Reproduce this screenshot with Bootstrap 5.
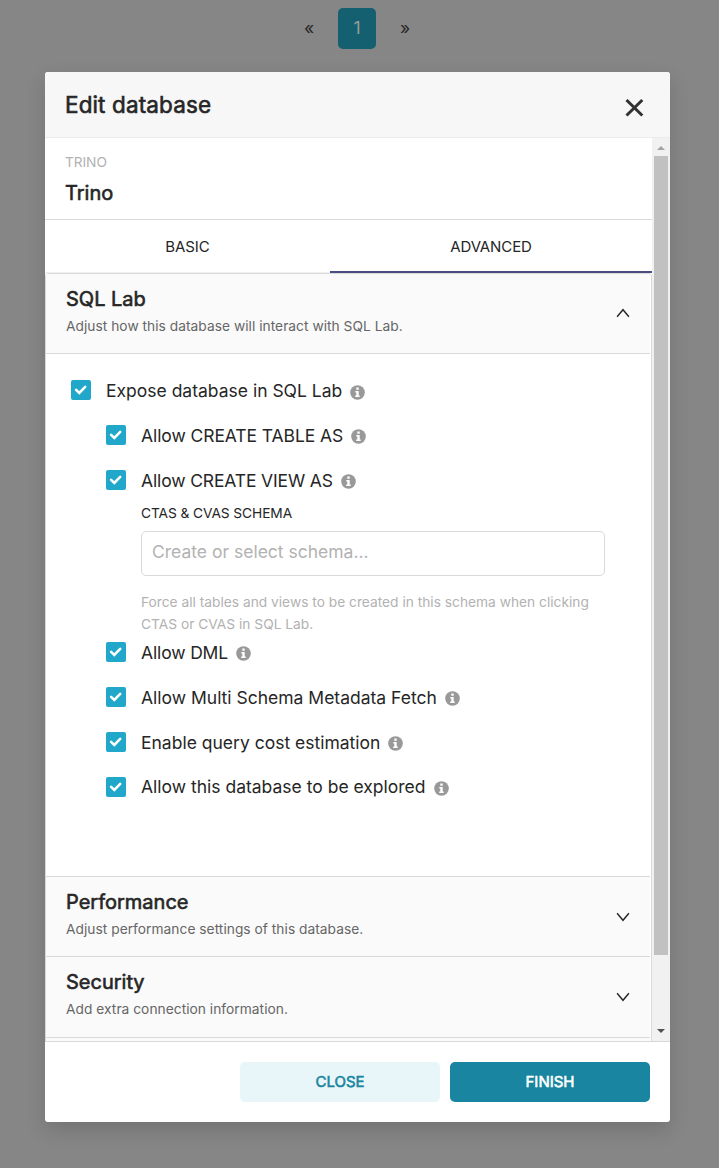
<!DOCTYPE html>
<html lang="en">
<head>
<meta charset="utf-8">
<meta name="viewport" content="width=device-width, initial-scale=1">
<title>Edit database</title>
<link href="https://cdn.jsdelivr.net/npm/bootstrap@5.3.0/dist/css/bootstrap.min.css" rel="stylesheet">
<script defer src="https://cdn.jsdelivr.net/npm/bootstrap@5.3.0/dist/js/bootstrap.bundle.min.js"></script>
<style>
body{font-family:Inter,"Liberation Sans",sans-serif;font-size:17.5px;color:#262626;background:#868686;height:1168px;overflow:hidden}
.pager{height:72px;padding-top:8px;padding-right:5px;gap:20px;color:#262626}
.pager span{width:18px;height:41px;line-height:40px;text-align:center}
.pager .current{width:38px;height:41px;background:#145f70;color:#9a9a9a;border-radius:5px}
.dialog{width:625px;height:1050px;margin-left:45px;background:#fff;border-radius:3px;box-shadow:0 8px 20px rgba(0,0,0,.14)}
.dialog-head{height:66px;background:#f7f7f7;border-bottom:1px solid #ebebeb;padding:0 20px;border-radius:3px 3px 0 0}
.dialog-x{margin:26px 6px 0 0}
.faux{font-weight:400;-webkit-text-stroke:.6px currentColor;margin:0}
.title{font-size:22.5px;line-height:66px;letter-spacing:.12px}
.dialog-body{height:903px;overflow:hidden}
.pane{width:607px}
.intro{height:82px;padding:14px 20px 0;border-bottom:1px solid #d9d9d9}
.kind{font-size:13.75px;line-height:20px;color:#b2b2b2;letter-spacing:-.1px}
.h-small{font-size:20px;line-height:26px}
.tabs{height:53px;font-size:15px;line-height:53px;text-align:center}
.tab-a{width:285px;border-bottom:1px solid #f0f0f0;letter-spacing:-.1px}
.tab-b{width:322px;border-bottom:2px solid #484f80;letter-spacing:-.1px}
.folds{border:1px solid #d9d9d9;border-radius:3px 3px 0 0}
.fold-head{height:80px;background:#fafafa;border-bottom:1px solid #d9d9d9;padding:12px 20px 0;margin-right:1px}
.fold-head .desc{font-size:13.75px;line-height:20px;color:#666;margin-top:4px;letter-spacing:.03px}
.fold-tall{height:81px}
.chev{margin:20px .5px 0 0}
.chev-down{margin-top:21px}
.fold-body{height:523px;padding:14px 25px 0;border-bottom:1px solid #d9d9d9;margin-right:1px}
.opt{height:44.9px}
.opt span{padding-top:2px}
.opt:last-child span{padding-top:0}
.opt svg.tick{margin-right:15px}
.opt svg.info{margin:3px 0 0 8px}
.opt:first-child svg.info{margin-top:5px}
.caps{letter-spacing:-.08px}
.caps-tight{letter-spacing:-.14px}
.sub{padding-left:35px}
.sub2{padding-left:70px;height:127px}
.cap{font-size:13.75px;line-height:20px;letter-spacing:-.09px}
.field{width:464px;height:45px;border:1px solid #d9d9d9;border-radius:5px;padding:0 10px;line-height:40px;color:#b2b2b2;margin-top:8px}
.hint{font-size:13.75px;line-height:22px;color:#b2b2b2;margin-top:15px}
.bar{width:18px;background:#f1f1f1;padding:0 2px}
.thumb{height:799px;background:#c1c1c1;width:14px}
.dialog-foot{height:81px;border-top:1px solid #d9d9d9;padding:20px 20px 0;gap:10px}
.act{width:200px;height:40px;border:0;border-radius:5px;font-size:15px;padding:0;line-height:40px}
.act-l{background:#e9f6f9;color:#1985a0}
.act-d{background:#1985a0;color:#fff}
</style>
</head>
<body>
<svg class="d-none">
<symbol id="tick" viewBox="0 0 20 20"><rect width="20" height="20" rx="2" fill="#20a7c9"/><path d="M5.1 9.9 8.3 12.9 14.2 6.900" fill="none" stroke="#fff" stroke-width="2.600" stroke-linecap="round"/></symbol>
<symbol id="info" viewBox="0 0 15 15"><circle cx="7.5" cy="7.5" r="7.3" fill="#999"/><path d="M6.3 2.6h2.4v2.2H6.3zM5.3 6h3.4v4.6h1v1.500H5.200v-1.500h1.100V7.500h-1z" fill="#fff"/></symbol>
<symbol id="down" viewBox="0 0 14 10"><path d="M1.100 1.200 7 8.300 12.900 1.200" fill="none" stroke="#262626" stroke-width="1.400"/></symbol>
<symbol id="up" viewBox="0 0 14 10"><path d="M1.100 8.800 7 1.700 12.900 8.800" fill="none" stroke="#262626" stroke-width="1.400"/></symbol>
</svg>
<nav class="pager d-flex justify-content-center"><span>«</span><span class="current">1</span><span>»</span></nav>
<div class="dialog">
<header class="dialog-head d-flex justify-content-between">
<h4 class="faux title">Edit database</h4>
<svg class="dialog-x" width="20" height="20" viewBox="0 0 20 20"><path d="M2.500 2 18.300 17.500M18.300 2 2.500 17.500" stroke="#323232" stroke-width="3"/></svg>
</header>
<div class="dialog-body d-flex">
<div class="pane">
<div class="intro"><div class="kind">TRINO</div><div class="faux h-small mt-2">Trino</div></div>
<div class="tabs d-flex"><div class="tab-a">BASIC</div><div class="tab-b">ADVANCED</div></div>
<div class="folds">
<div class="fold-head d-flex justify-content-between"><div><h5 class="faux h-small">SQL Lab</h5><div class="desc">Adjust how this database will interact with SQL Lab.</div></div><svg class="chev" width="14" height="14"><use href="#up"/></svg></div>
<div class="fold-body">
<div class="opt d-flex align-items-center"><svg class="tick" width="20" height="20"><use href="#tick"/></svg><span>Expose database in SQL Lab</span><svg class="info" width="15" height="15"><use href="#info"/></svg></div>
<div class="opt sub d-flex align-items-center"><svg class="tick" width="20" height="20"><use href="#tick"/></svg><span class="caps">Allow CREATE TABLE AS</span><svg class="info" width="15" height="15"><use href="#info"/></svg></div>
<div class="opt sub d-flex align-items-center"><svg class="tick" width="20" height="20"><use href="#tick"/></svg><span class="caps-tight">Allow CREATE VIEW AS</span><svg class="info" width="15" height="15"><use href="#info"/></svg></div>
<div class="sub2"><div class="cap">CTAS &amp; CVAS SCHEMA</div><div class="field">Create or select schema...</div><div class="hint">Force all tables and views to be created in this schema when clicking<br>CTAS or CVAS in SQL Lab.</div></div>
<div class="opt sub d-flex align-items-center"><svg class="tick" width="20" height="20"><use href="#tick"/></svg><span class="caps-tight">Allow DML</span><svg class="info" width="15" height="15"><use href="#info"/></svg></div>
<div class="opt sub d-flex align-items-center"><svg class="tick" width="20" height="20"><use href="#tick"/></svg><span>Allow Multi Schema Metadata Fetch</span><svg class="info" width="15" height="15"><use href="#info"/></svg></div>
<div class="opt sub d-flex align-items-center"><svg class="tick" width="20" height="20"><use href="#tick"/></svg><span>Enable query cost estimation</span><svg class="info" width="15" height="15"><use href="#info"/></svg></div>
<div class="opt sub d-flex align-items-center"><svg class="tick" width="20" height="20"><use href="#tick"/></svg><span>Allow this database to be explored</span><svg class="info" width="15" height="15"><use href="#info"/></svg></div>
</div>
<div class="fold-head d-flex justify-content-between"><div><h5 class="faux h-small">Performance</h5><div class="desc">Adjust performance settings of this database.</div></div><svg class="chev chev-down" width="14" height="14"><use href="#down"/></svg></div>
<div class="fold-head fold-tall d-flex justify-content-between"><div><h5 class="faux h-small">Security</h5><div class="desc">Add extra connection information.</div></div><svg class="chev chev-down" width="14" height="14"><use href="#down"/></svg></div>
<div class="fold-head"></div>
</div>
</div>
<div class="bar d-flex flex-column"><svg width="14" height="18"><path d="M3 12h8L7 8z" fill="#a3a3a3"/></svg><div class="thumb"></div><svg class="mt-auto" width="14" height="18"><path d="M3 6h8L7 10z" fill="#505050"/></svg></div>
</div>
<footer class="dialog-foot d-flex justify-content-end"><button class="act act-l faux">CLOSE</button><button class="act act-d faux">FINISH</button></footer>
</div>
</body>
</html>
